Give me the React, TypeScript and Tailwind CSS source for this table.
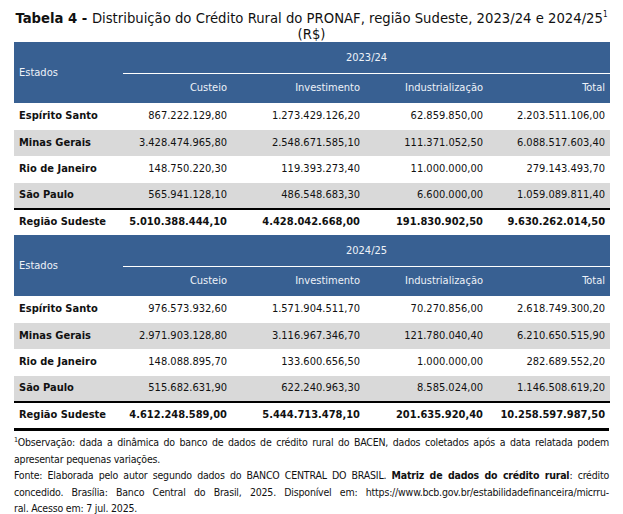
const rows2324 = [
  { estado: 'Espírito Santo', custeio: '867.222.129,80', investimento: '1.273.429.126,20', industrializacao: '62.859.850,00', total: '2.203.511.106,00' },
  { estado: 'Minas Gerais', custeio: '3.428.474.965,80', investimento: '2.548.671.585,10', industrializacao: '111.371.052,50', total: '6.088.517.603,40' },
  { estado: 'Rio de Janeiro', custeio: '148.750.220,30', investimento: '119.393.273,40', industrializacao: '11.000.000,00', total: '279.143.493,70' },
  { estado: 'São Paulo', custeio: '565.941.128,10', investimento: '486.548.683,30', industrializacao: '6.600.000,00', total: '1.059.089.811,40' },
];

const total2324 = { estado: 'Região Sudeste', custeio: '5.010.388.444,10', investimento: '4.428.042.668,00', industrializacao: '191.830.902,50', total: '9.630.262.014,50' };

const rows2425 = [
  { estado: 'Espírito Santo', custeio: '976.573.932,60', investimento: '1.571.904.511,70', industrializacao: '70.270.856,00', total: '2.618.749.300,20' },
  { estado: 'Minas Gerais', custeio: '2.971.903.128,80', investimento: '3.116.967.346,70', industrializacao: '121.780.040,40', total: '6.210.650.515,90' },
  { estado: 'Rio de Janeiro', custeio: '148.088.895,70', investimento: '133.600.656,50', industrializacao: '1.000.000,00', total: '282.689.552,20' },
  { estado: 'São Paulo', custeio: '515.682.631,90', investimento: '622.240.963,30', industrializacao: '8.585.024,00', total: '1.146.508.619,20' },
];

const total2425 = { estado: 'Região Sudeste', custeio: '4.612.248.589,00', investimento: '5.444.713.478,10', industrializacao: '201.635.920,40', total: '10.258.597.987,50' };

type Row = typeof total2324;

function PeriodBlock({ period, rows, total }: { period: string; rows: Row[]; total: Row }) {
  return (
    <>
      <tr className="bg-[#386092] text-[#eef2f8]">
        <td rowSpan={2} className="pl-[5px] pt-[2px] align-middle">Estados</td>
        <td colSpan={4} className="h-[31px] text-center border-b border-white pt-[1px]">{period}</td>
      </tr>
      <tr className="bg-[#386092] text-[#eef2f8] h-[30px]">
        <td className="text-right pr-[5px]">Custeio</td>
        <td className="text-right pr-[5px]">Investimento</td>
        <td className="text-right pr-[5px]">Industrialização</td>
        <td className="text-right pr-[5px]">Total</td>
      </tr>
      {rows.map((r, i) => (
        <tr key={r.estado} className={`h-[26.5px] ${i % 2 === 1 ? 'bg-[#d9d9d9]' : 'bg-white'} ${i === rows.length - 1 ? 'border-b-2 border-black' : ''}`}>
          <td className="pl-[5px] font-bold">{r.estado}</td>
          <td className="text-right pr-[5px]">{r.custeio}</td>
          <td className="text-right pr-[5px]">{r.investimento}</td>
          <td className="text-right pr-[5px]">{r.industrializacao}</td>
          <td className="text-right pr-[5px]">{r.total}</td>
        </tr>
      ))}
      <tr className="h-[26px] font-bold">
        <td className="pl-[5px]">{total.estado}</td>
        <td className="text-right pr-[5px]">{total.custeio}</td>
        <td className="text-right pr-[5px]">{total.investimento}</td>
        <td className="text-right pr-[5px]">{total.industrializacao}</td>
        <td className="text-right pr-[5px]">{total.total}</td>
      </tr>
    </>
  );
}

export default function App() {
  return (
    <div className="w-[623px] h-[514px] bg-white text-[#111] font-['DejaVu_Sans_Condensed','DejaVu_Sans',sans-serif] overflow-hidden">
      {/* Title */}
      <div className="pt-[10px] px-[10px] text-center text-[14.7px] leading-[16px] whitespace-nowrap">
        <span className="font-bold">Tabela 4 - </span>
        Distribuição do Crédito Rural do PRONAF, região Sudeste, 2023/24 e 2024/25
        <span className="relative -top-[6px] text-[8px] leading-none">1</span>
        <br />
        (R$)
      </div>

      {/* Table */}
      <table className="ml-[14px] w-[596px] border-collapse text-[11px] table-fixed">
        <colgroup>
          <col className="w-[109px]" />
          <col className="w-[109px]" />
          <col className="w-[133px]" />
          <col className="w-[123px]" />
          <col className="w-[122px]" />
        </colgroup>
        <tbody>
          <PeriodBlock period="2023/24" rows={rows2324} total={total2324} />
          <PeriodBlock period="2024/25" rows={rows2425} total={total2425} />
        </tbody>
      </table>

      {/* Footnote */}
      <div className="mx-[14px] border-t-[3px] border-black pt-[3px] text-[10.5px] leading-[16.5px] tracking-[-0.2px] text-justify">
        <p>
          <span className="relative -top-[4px] text-[7px] leading-none">1</span>Observação: dada a dinâmica do banco de dados de crédito rural do BACEN, dados coletados após a data relatada podem apresentar pequenas variações.
        </p>
        <p className="[text-align-last:justify]">
          Fonte: Elaborada pelo autor segundo dados do BANCO CENTRAL DO BRASIL. <span className="font-bold">Matriz de dados do crédito rural</span>: crédito concedido. Brasília: Banco Central do Brasil, 2025. Disponível em: https://www.bcb.gov.br/estabilidadefinanceira/micrru-
        </p>
        <p>ral. Acesso em: 7 jul. 2025.</p>
      </div>
    </div>
  );
}
